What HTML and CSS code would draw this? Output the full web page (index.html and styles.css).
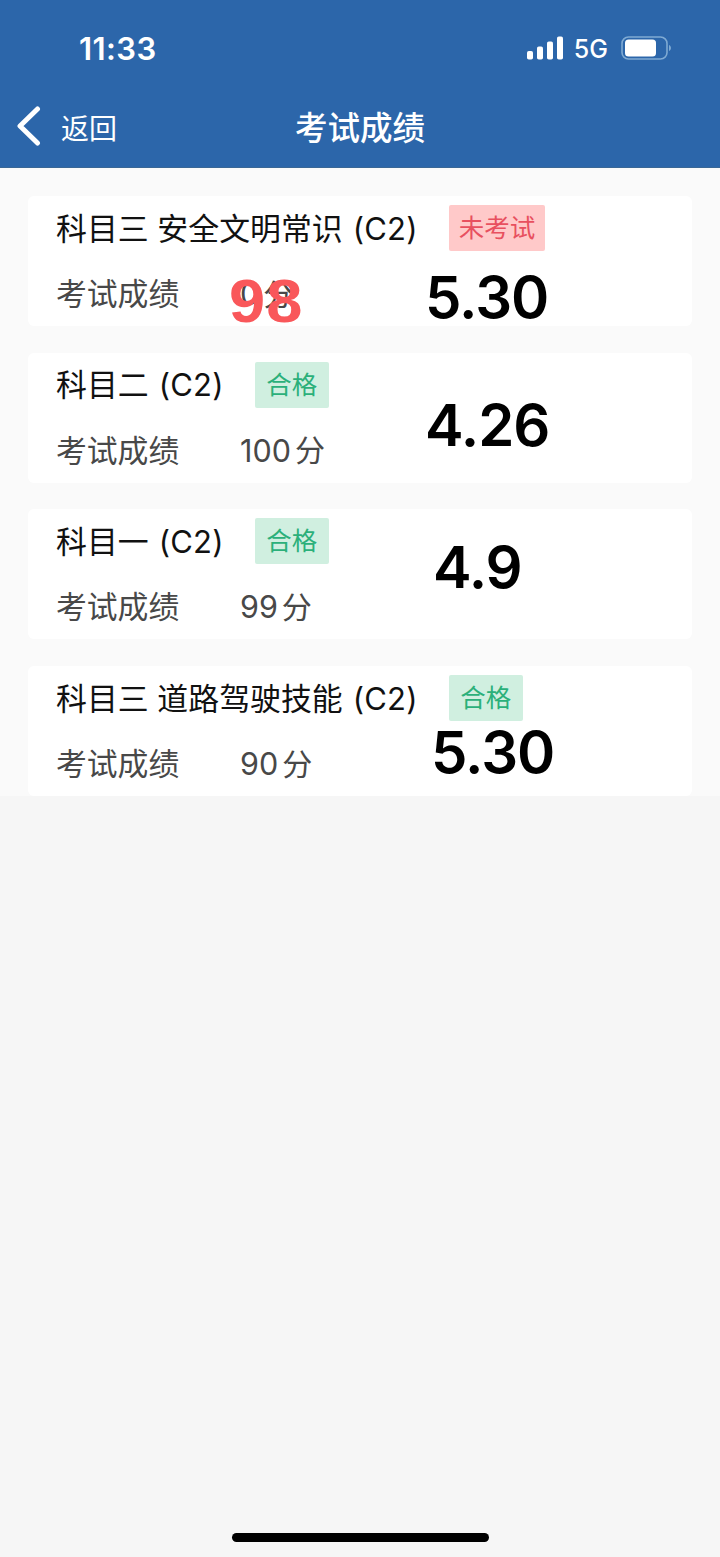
FILE: index.html
```
<!DOCTYPE html>
<html lang="zh-CN">
    <head>
        <meta charset="UTF-8">
        <meta name="viewport" content="width=device-width, initial-scale=1.0">
        <title>考试成绩</title>
        <link rel="stylesheet" href="styles.css">
    </head>

    <body>
        <header>
            <div class="status-bar">
                <span class="time">11:33</span>
                <div class="status-icons">
                    <svg class="signal" width="36" height="24" viewBox="0 0 36 24" fill="#fff">
                        <rect x="0" y="15" width="6" height="8.5" rx="1.8"/>
                        <rect x="10" y="10.5" width="6" height="13" rx="1.8"/>
                        <rect x="20" y="5.5" width="6" height="18" rx="1.8"/>
                        <rect x="30" y="0.5" width="6" height="23" rx="1.8"/>
                    </svg>
                    <span class="network">5G</span>
                    <svg class="battery" width="51" height="24" viewBox="0 0 51 24">
                        <rect x="1" y="1" width="45" height="22" rx="6.5" fill="none" stroke="#7faad3" stroke-width="1.6"/>
                        <rect x="4" y="3.5" width="31" height="17" rx="3.5" fill="#fff"/>
                        <path d="M48 9v6c2.600-1 2.600-5 0-6z" fill="#7faad3"/>
                    </svg>
                </div>
            </div>
            <nav>
                <a class="back">
                    <svg width="24" height="40" viewBox="0 0 24 40">
                        <path d="M20.500 3L3 20l17.500 17" fill="none" stroke="#fff" stroke-width="5" stroke-linecap="round" stroke-linejoin="round"/>
                    </svg>
                    <span>返回</span>
                </a>
                <h1>考试成绩</h1>
            </nav>
        </header>

        <main>
            <section class="card">
                <div class="row">
                    <h2>科目三 安全文明常识</h2>
                    <span class="type">(C2)</span>
                    <span class="badge pending">未考试</span>
                </div>
                <div class="row score">
                    <span class="label">考试成绩</span>
                    <span class="num">0</span><span class="unit">分</span>
                </div>
                <span class="mark">98</span>
                <span class="date first">5.30</span>
            </section>

            <section class="card">
                <div class="row">
                    <h2>科目二</h2>
                    <span class="type">(C2)</span>
                    <span class="badge passed">合格</span>
                </div>
                <div class="row score">
                    <span class="label">考试成绩</span>
                    <span class="num">100</span><span class="unit">分</span>
                </div>
                <span class="date second">4.26</span>
            </section>

            <section class="card">
                <div class="row">
                    <h2>科目一</h2>
                    <span class="type">(C2)</span>
                    <span class="badge passed">合格</span>
                </div>
                <div class="row score">
                    <span class="label">考试成绩</span>
                    <span class="num">99</span><span class="unit">分</span>
                </div>
                <span class="date third">4.9</span>
            </section>

            <section class="card">
                <div class="row">
                    <h2>科目三 道路驾驶技能</h2>
                    <span class="type">(C2)</span>
                    <span class="badge passed">合格</span>
                </div>
                <div class="row score">
                    <span class="label">考试成绩</span>
                    <span class="num">90</span><span class="unit">分</span>
                </div>
                <span class="date fourth">5.30</span>
            </section>
        </main>

        <div class="home-bar"></div>
    </body>
</html>
```
FILE: styles.css
```
* {
    box-sizing: border-box;
}
body {
    font-family: Inter, "Noto Sans CJK SC", sans-serif;
    background-color: #f6f6f6;
    margin: 0;
    min-height: 1557px;
    display: flex;
    flex-direction: column;
}
header {
    height: 168px;
    background-color: #2c66aa;
    border-bottom: 1px solid #3a6795;
    color: #fff;
}
.status-bar {
    height: 96px;
    padding: 0 48px 0 79px;
    display: flex;
    justify-content: space-between;
    align-items: center;
}
.time {
    font-size: 31px;
    font-weight: 600;
    letter-spacing: 0.4px;
}
.status-icons {
    display: flex;
    align-items: center;
}
.network {
    font-size: 25px;
    font-weight: 500;
    margin: 2px 13px 0 11px;
}
nav {
    height: 60px;
    display: grid;
    grid-template-columns: 1fr auto 1fr;
    align-items: center;
    padding: 0 17px;
}
.back {
    display: flex;
    align-items: center;
    gap: 20px;
    font-size: 28px;
}
.back span {
    padding-top: 2px;
}
h1 {
    font-size: 32.500px;
    font-weight: 500;
    margin: 0;
    padding-bottom: 1px;
}
main {
    height: 628px;
    padding: 28px 28px 0;
    background-color: #fafafa;
    display: flex;
    flex-direction: column;
    gap: 26.700px;
}
.card {
    position: relative;
    flex: none;
    height: 130px;
    padding: 9px 28px;
    background-color: #fff;
    border-radius: 6px;
    display: flex;
    flex-direction: column;
    gap: 20px;
}
.row {
    height: 46px;
    display: flex;
    align-items: center;
    font-size: 31px;
    white-space: nowrap;
    color: #111;
}
h2 {
    font-size: 30.900px;
    font-weight: 400;
    margin: 0;
    padding-bottom: 4px;
}
.type {
    margin-left: 10px;
    font-size: 31px;
    letter-spacing: 0.2px;
}
.badge {
    height: 46px;
    margin-left: 31px;
    padding: 0 10px;
    border-radius: 2px;
    font-size: 25.500px;
    line-height: 46px;
}
.pending {
    background-color: #ffc9c9;
    color: #e8505f;
}
.passed {
    padding: 0 11.500px;
    background-color: #d0efe0;
    color: #2bb07a;
}
.score {
    color: #484848;
}
.label {
    width: 184px;
    font-size: 30.800px;
    padding-bottom: 5px;
}
.num {
    margin-right: 4px;
    font-size: 30.500px;
    padding-bottom: 1px;
}
.unit {
    font-size: 30px;
    padding-bottom: 5px;
}
/* marks written over the cards */
.mark {
    position: absolute;
    left: 201px;
    top: 70px;
    font-family: "Liberation Sans", Arial, sans-serif;
    font-size: 62px;
    font-weight: bold;
    line-height: 70px;
    letter-spacing: 1px;
    transform: scaleX(1.05);
    transform-origin: left;
    color: #f9575a;
}
.date {
    position: absolute;
    font-size: 58px;
    font-weight: 600;
    line-height: 70px;
    letter-spacing: -1px;
    color: #000;
}
.first {
    left: 397px;
    top: 66px;
}
.second {
    left: 397px;
    top: 37px;
}
.third {
    left: 405px;
    top: 23px;
}
.fourth {
    left: 403px;
    top: 51px;
}
.home-bar {
    width: 257px;
    height: 9px;
    margin: auto auto 15px;
    border-radius: 5px;
    background-color: #000;
}
```
